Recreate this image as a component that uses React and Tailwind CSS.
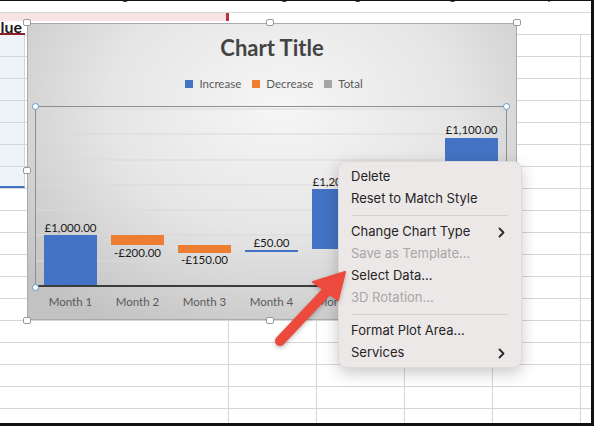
import React from "react";

const ROWS = 19;

const menuItems = [
  { label: "Delete" },
  { label: "Reset to Match Style" },
  { sep: true },
  { label: "Change Chart Type", sub: true },
  { label: "Save as Template...", disabled: true },
  { label: "Select Data..." },
  { label: "3D Rotation...", disabled: true },
  { sep: true },
  { label: "Format Plot Area..." },
  { label: "Services", sub: true },
];

// waterfall bars in svg coords (svg origin = page 28,91)
const bars = [
  { x: 16, y: 143, h: 51, c: "#4472c4", label: "£1,000.00", ly: 140 },
  { x: 83, y: 143, h: 10, c: "#ed7d31", label: "-£200.00", ly: 165 },
  { x: 150, y: 153, h: 8, c: "#ed7d31", label: "-£150.00", ly: 172 },
  { x: 217, y: 158, h: 2, c: "#4472c4", label: "£50.00", ly: 155 },
  { x: 284, y: 97, h: 60, c: "#4472c4", label: "£1,200.00", ly: 94 },
  { x: 351, y: 160, h: 0, c: "#4472c4", label: "", ly: 0 },
  { x: 417, y: 46, h: 148, c: "#4472c4", label: "£1,100.00", ly: 42 },
];

const Handle = ({ className }) => (
  <div
    className={`absolute w-[8px] h-[7px] bg-white border border-[#9a9a9a] rounded-[2px] ${className}`}
  />
);

const Dot = ({ className }) => (
  <div
    className={`absolute w-[7px] h-[7px] bg-white border border-[#5b9bd5] rounded-full ${className}`}
  />
);

const Chevron = () => (
  <svg width="7" height="11" viewBox="0 0 7 11">
    <path
      d="M1.5 1.5 L5.5 5.5 L1.5 9.5"
      fill="none"
      stroke="#2a2a2a"
      strokeWidth="1.8"
      strokeLinecap="round"
      strokeLinejoin="round"
    />
  </svg>
);

const GridRow = ({ index }) => {
  const inSelection = index >= 1 && index <= 7;
  return (
    <div className="flex h-[22px] shrink-0 border-b border-[#d6d6d6]">
      <div className="w-[229px] shrink-0 border-r border-[#d6d6d6] flex">
        {inSelection && (
          <div
            className={`w-[25px] h-full bg-[#eef2f9] border-r border-[#cfd6e2] ${
              index === 7 ? "border-b-2 border-b-[#4472c4] h-[22px]" : ""
            }`}
          />
        )}
      </div>
      <div className="w-[88px] shrink-0 border-r border-[#d6d6d6]" />
      <div className="w-[88px] shrink-0 border-r border-[#d6d6d6]" />
      <div className="w-[88px] shrink-0 border-r border-[#d6d6d6]" />
      <div className="w-[88px] shrink-0 border-r border-[#d6d6d6]" />
      <div className="flex-1" />
    </div>
  );
};

export default function App() {
  return (
    <div
      className="relative w-[594px] h-[426px] overflow-hidden bg-white border-t border-r-[3px] border-b-[3px] border-[#111]"
      style={{ fontFamily: "Lato, 'Open Sans', sans-serif" }}
    >
      {/* spreadsheet */}
      <div className="flex flex-col">
        <div className="flex h-[12px] shrink-0 border-b border-[#d6d6d6] overflow-hidden text-[13px] text-[#333] leading-[14px]">
          <div className="w-[229px] shrink-0 text-center -mt-[13px] pl-[10px]">Budget</div>
          <div className="w-[88px] shrink-0 text-center -mt-[13px]">Change</div>
          <div className="w-[88px] shrink-0 text-center -mt-[13px] pr-[12px]">Target</div>
          <div className="w-[88px] shrink-0 text-center -mt-[13px]">Eg</div>
          <div className="w-[88px] shrink-0 text-center -mt-[13px]">Group</div>
        </div>
        <div className="flex h-[22px] shrink-0">
          <div className="w-[229px] shrink-0 flex flex-col">
            <div className="h-[9px] bg-[#f8e3e5] flex justify-end">
              <div className="w-[3px] h-[8px] bg-[#c0303a]" />
            </div>
            <div className="flex-1 flex border-b border-[#d6d6d6]">
              <div className="w-[25px] border-b-2 border-[#8e1f2a] overflow-hidden flex justify-end items-end pr-[3px]">
                <span className="shrink-0 whitespace-nowrap text-[16px] font-bold leading-[12px] text-[#1a1a1a]">
                  Value
                </span>
              </div>
            </div>
          </div>
          <div className="flex-1 flex flex-col">
            <div className="h-[9px]" />
            <div className="flex-1 border-b border-[#d6d6d6]" />
          </div>
        </div>
        {Array.from({ length: ROWS }).map((_, i) => (
          <GridRow key={i} index={i + 1} />
        ))}
      </div>

      {/* chart object */}
      <div className="absolute left-[27px] top-[22px] w-[490px] h-[297px] border border-[#a9a9a9] bg-[radial-gradient(ellipse_70%_85%_at_52%_28%,#f6f6f6_0%,#e6e6e6_50%,#c2c2c2_100%)]">
        <div className="flex flex-col items-center">
          <div className="mt-[12px] h-[24px] leading-[24px] text-[22px] font-bold text-[#444]">
            Chart Title
          </div>
          <div className="mt-[17px] h-[14px] flex items-center gap-[11px] text-[11.5px] text-[#595959] leading-[14px] ml-[4px]">
            <div className="flex items-center gap-[6px]">
              <span className="w-[8px] h-[8px] bg-[#4472c4]" />
              Increase
            </div>
            <div className="flex items-center gap-[6px]">
              <span className="w-[8px] h-[8px] bg-[#ed7d31]" />
              Decrease
            </div>
            <div className="flex items-center gap-[6px]">
              <span className="w-[8px] h-[8px] bg-[#a5a5a5]" />
              Total
            </div>
          </div>
          <svg width="488" height="226" className="mt-[1px] block">
            {[17, 42, 68, 93, 118, 143, 169].map((y) => (
              <line key={y} x1="7" x2="478" y1={y} y2={y} stroke="#d9d9d9" strokeWidth="1" />
            ))}
            <rect x="7.5" y="14.5" width="471" height="180" fill="none" stroke="#8f8f8f" strokeWidth="1" />
            {bars.map((b, i) => (
              <g key={i}>
                {b.h > 0 && <rect x={b.x} y={b.y} width="53" height={b.h} fill={b.c} />}
                {b.label && (
                  <text
                    x={b.x + 26.5}
                    y={b.ly}
                    textAnchor="middle"
                    fontSize="11.5"
                    fill="#1a1a1a"
                    fontFamily="Lato, sans-serif"
                  >
                    {b.label}
                  </text>
                )}
              </g>
            ))}
            <line x1="7" x2="478" y1="194" y2="194" stroke="#3c3c3c" strokeWidth="2.2" />
            {[1, 2, 3, 4, 5, 6, 7].map((m, i) => (
              <text
                key={m}
                x={42.5 + i * 67}
                y="214"
                textAnchor="middle"
                fontSize="11.5"
                fill="#595959"
                fontFamily="Lato, sans-serif"
              >
                Month {m}
              </text>
            ))}
          </svg>
        </div>

        <Handle className="-left-[5px] -top-[5px]" />
        <Handle className="left-[238px] -top-[5px]" />
        <Handle className="-right-[5px] -top-[5px]" />
        <Handle className="-left-[5px] top-[143px]" />
        <Handle className="-right-[5px] top-[143px]" />
        <Handle className="-left-[5px] -bottom-[5px]" />
        <Handle className="left-[238px] -bottom-[5px]" />
        <Handle className="-right-[5px] -bottom-[5px]" />

        <Dot className="left-[4px] top-[79px]" />
        <Dot className="left-[475px] top-[79px]" />
        <Dot className="left-[4px] top-[260px]" />
      </div>

      {/* context menu */}
      <div
        className="absolute left-[338px] top-[160px] w-[184px] h-[207px] rounded-[9px] bg-[#ece8e8] border border-[#dedada] shadow-[0_5px_16px_rgba(0,0,0,0.22)] pt-[4px] pb-[4px] text-[13px] text-[#242424]"
        style={{ fontFamily: "Inter, 'Open Sans', sans-serif" }}
      >
        {menuItems.map((item, i) =>
          item.sep ? (
            <div key={i} className="h-[11px] flex items-center px-[13px]">
              <div className="w-full h-px bg-[#d3cfcf]" />
            </div>
          ) : (
            <div
              key={i}
              className={`h-[22px] flex items-center justify-between pl-[12px] pr-[16px] ${
                item.disabled ? "text-[#a9a6a6]" : ""
              }`}
            >
              <span>{item.label}</span>
              {item.sub && <Chevron />}
            </div>
          )
        )}
      </div>

      {/* red arrow */}
      <svg
        className="absolute left-0 top-0 pointer-events-none drop-shadow-[0_2px_2px_rgba(0,0,0,0.25)]"
        width="594"
        height="426"
      >
        <line x1="280" y1="340" x2="329" y2="288" stroke="#ec4a3d" strokeWidth="10" strokeLinecap="round" />
        <polygon points="345,271 313,281 338,299" fill="#ec4a3d" stroke="#ec4a3d" strokeWidth="2" strokeLinejoin="round" />
      </svg>
    </div>
  );
}
